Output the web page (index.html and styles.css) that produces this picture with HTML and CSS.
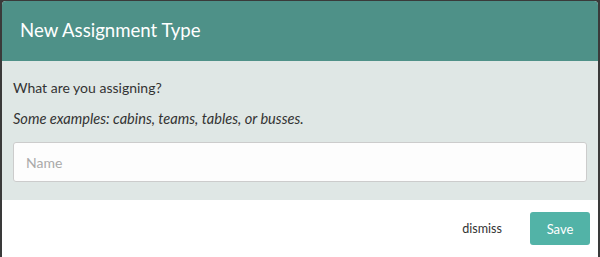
FILE: index.html
```html
<!DOCTYPE html>
<html lang="en">
<head>
    <meta charset="UTF-8">
    <title>New Assignment Type</title>
    <link rel="stylesheet" href="styles.css">
</head>
<body>
    <div class="modal">
        <div class="modal-header">
            <h2>New Assignment Type</h2>
        </div>
        <div class="modal-body">
            <p class="question">What are you assigning?</p>
            <p class="examples">Some examples: cabins, teams, tables, or busses.</p>
            <input type="text" class="name-input" placeholder="Name">
        </div>
        <div class="modal-footer">
            <button class="dismiss">dismiss</button>
            <button class="save">Save</button>
        </div>
    </div>
</body>
</html>
```
FILE: styles.css
```css
* {
    margin: 0;
    padding: 0;
    box-sizing: border-box;
    font-family: 'Lato', sans-serif;
}
body {
    background: #3a3a3a;
    padding: 1px 2px 0 2px;
    height: 257px;
    overflow: hidden;
}
.modal {
    background: #fff;
    border-radius: 4px 4px 0 0;
    overflow: hidden;
    height: 256px;
}
.modal-header {
    background: #4e9188;
    height: 60px;
    padding: 0 18px 3px 18px;
    display: flex;
    align-items: center;
}
.modal-header h2 {
    color: #fff;
    font-size: 18.6px;
    font-weight: 400;
}
.modal-body {
    background: #dfe7e5;
    padding: 17px 11px 17px 11px;
    height: 139px;
}
.question {
    color: #333;
    font-size: 14px;
    line-height: 20px;
}
.examples {
    color: #333;
    font-size: 14.6px;
    font-style: italic;
    line-height: 20px;
    margin-top: 11px;
}
.name-input {
    display: block;
    width: 100%;
    height: 40px;
    margin-top: 13px;
    padding: 0 12px;
    border: 1px solid #ccc;
    border-radius: 3px;
    background: #fdfdfd;
    font-size: 14px;
    color: #333;
}
.name-input::placeholder {
    color: #aaa;
}
.modal-footer {
    display: flex;
    justify-content: flex-end;
    align-items: center;
    gap: 28px;
    padding: 12px 8px 0 0;
}
.modal-footer button {
    border: none;
    cursor: pointer;
}
.dismiss {
    background: none;
    color: #333;
    font-size: 12.6px;
}
.save {
    background: #52b3a7;
    color: #fff;
    font-size: 13px;
    width: 60px;
    height: 33px;
    border-radius: 3px;
}
```
